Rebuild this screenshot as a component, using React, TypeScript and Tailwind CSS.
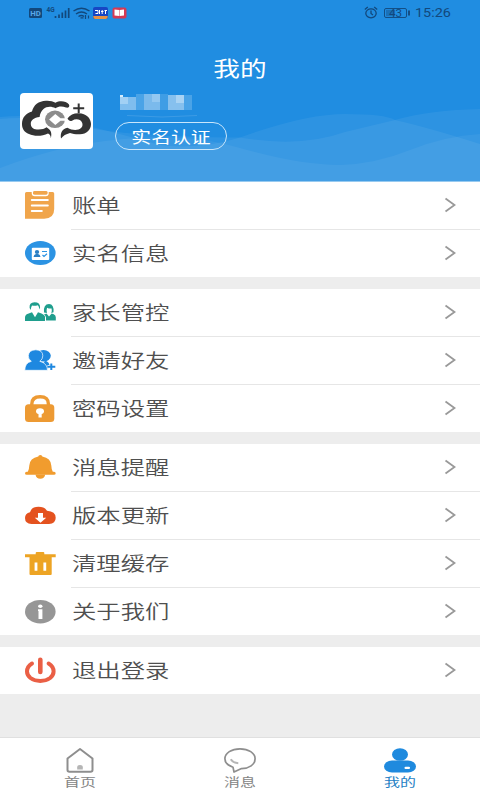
import React, { useState } from 'react';

type MenuItem = {
  label: string;
  icon: React.ReactNode;
};

const BillIcon = () => (
  <>
    <path d="M2.5 2h5.2v1.2q0 3 3 3h11q3 0 3-3V2h4q1.5 0 1.5 1.5V19q0 9.7-10 9.7H1V3.5Q1 2 2.5 2Z" fill="#f0a54b" />
    <path d="M9 2.200Q9 1 10.500 1H22q1.500 0 1.500 1.200v1q0 1.600-2 1.600H11q-2 0-2-1.600Z" fill="#f0a54b" />
    <path d="M7.800 10h16M7.800 15.500h16M7.800 21h10" stroke="#fff" strokeWidth="2" strokeLinecap="round" />
  </>
);

const IdIcon = () => (
  <>
    <ellipse cx="16.3" cy="15" rx="15.3" ry="12" fill="#2b93e3" />
    <rect x="7.8" y="9.8" width="17.4" height="12.2" rx="1" fill="#fff" />
    <ellipse cx="13" cy="14" rx="2.2" ry="2.1" fill="#2b7fc4" />
    <path d="M9.500 19q.3-2.500 2.500-3h2q2.200.5 2.500 3Z" fill="#2b7fc4" />
    <path d="M18 13.500h5M18.500 17l1.500 1.500 3-2.700" stroke="#2b93e3" strokeWidth="1.2" fill="none" />
  </>
);

const ParentsIcon = () => (
  <g fill="#1f9e8d">
    <path d="M5.600 11Q5 5.500 10.500 5.300q5.700 0 5.600 5.200l-.9 2Q15 8.800 13.500 8.300q-2.500 1-5.500.2Q7 10 6.700 13Z" />
    <path d="M1 24v-3.500q0-2.700 3-3.700l4-1.600 3 5 3-5 3.500 1.400q2.500 1 3.500 3V24Z" />
    <path d="M20 15.500q-.8-8.300 5-8.500 5.200.2 4.500 8.200l-2.200.8q.8-2.500.3-4.500-2.500.3-4.500-.8-1 2.500-.2 5.300Z" />
    <path d="M20 17.500l2.500-1 2.500 3 2.700-3 2 .8q2.100.8 2.100 3V23.500H22v-3q-.4-2-2-3Z" />
  </g>
);

const InviteIcon = () => (
  <g fill="#1e88e0">
    <ellipse cx="19.5" cy="10.8" rx="7.3" ry="5.8" />
    <path d="M17 24q9 0 9-2.500-.5-4.500-5-6Z" />
    <path d="M.8 25.300q0-7.300 6.500-9-3-2-3-5.600Q4.800 5 11.800 4.800q7 .3 7 6 0 3.500-3 5.500 7.700 2 7.700 9Z" stroke="#fff" strokeWidth=".7" />
    <path d="M27.300 18.300v7M23.500 21.800h7.800" stroke="#fff" strokeWidth="3.4" />
    <path d="M27.300 18.600v6.400M23.500 21.800h7.800" stroke="#1e88e0" strokeWidth="2" />
  </g>
);

const LockIcon = () => (
  <>
    <path d="M7.800 13v-2q0-7.300 8.300-7.300T24.400 11v2" fill="none" stroke="#ed9a33" strokeWidth="3.4" />
    <rect x="1" y="11.3" width="29.3" height="17.7" rx="3.5" fill="#ed9a33" />
    <ellipse cx="16" cy="18.3" rx="4" ry="3" fill="#fff" />
    <path d="M14.500 20h3.200v4.500h-3.200Z" fill="#fff" />
  </>
);

const BellIcon = () => (
  <g fill="#f19c2e">
    <path d="M14.300 4.500q0-1.500 2-1.500t2 1.500q8.600 1.500 9 9 .2 4.600 1.500 6.200H30q1.700 0 1.700 1.500T30 22.700H2.700Q1 22.700 1 21.200t1.700-1.500h1.100q1.300-1.600 1.500-6.200.5-7.500 9-9Z" />
    <path d="M11.500 22.500h9.700q-.8 4.300-4.900 4.300t-4.800-4.300Z" />
  </g>
);

const CloudIcon = () => (
  <>
    <path d="M7.500 24Q1 23.700 1 18q0-4.700 5-5.800Q7.500 6.700 14.500 6.700q6 0 8.500 4 8.700.5 8.700 7 0 6-6.700 6.300Z" fill="#e4521f" />
    <path d="M14 13h5v4.800h3.200l-5.700 5-5.700-5H14Z" fill="#fff" />
  </>
);

const TrashIcon = () => (
  <>
    <path d="M11.700 6.300V5q0-1 1-1h6.600q1 0 1 1v1.300h11.400v3h-4V26q0 1-1 1H6.500q-1 0-1-1V9.300H1v-3Z" fill="#eda424" />
    <path d="M12 14.500v8.200M20.800 14.500v8.200" stroke="#fff" strokeWidth="2.8" />
  </>
);

const InfoIcon = () => (
  <>
    <ellipse cx="16.3" cy="15.7" rx="15.3" ry="11.8" fill="#969696" />
    <ellipse cx="16.3" cy="10.3" rx="2.2" ry="1.7" fill="#fff" />
    <path d="M14 13.300h4.400v9.700h-3.900v-8H14Z" fill="#fff" />
  </>
);

const PowerIcon = () => (
  <g fill="none" stroke="#ea5f45" strokeWidth="4" strokeLinecap="round">
    <path d="M8 8.500Q3 11.500 3 16.500q0 3.600 3.500 6.500 4 2.900 9.800 2.900t9.800-2.900q3.500-2.900 3.500-6.500 0-5-5-8" />
    <path d="M16.300 4.800V17" strokeWidth="4.6" />
  </g>
);

const groups: MenuItem[][] = [
  [
    { label: '账单', icon: <BillIcon /> },
    { label: '实名信息', icon: <IdIcon /> },
  ],
  [
    { label: '家长管控', icon: <ParentsIcon /> },
    { label: '邀请好友', icon: <InviteIcon /> },
    { label: '密码设置', icon: <LockIcon /> },
  ],
  [
    { label: '消息提醒', icon: <BellIcon /> },
    { label: '版本更新', icon: <CloudIcon /> },
    { label: '清理缓存', icon: <TrashIcon /> },
    { label: '关于我们', icon: <InfoIcon /> },
  ],
  [{ label: '退出登录', icon: <PowerIcon /> }],
];

const tabs = [
  {
    id: 'home',
    label: '首页',
    icon: (
      <>
        <path d="M3.500 11.500 16 2l12.500 9.500V23q0 1.800-2 1.800h-21q-2 0-2-1.800Z" fill="none" stroke="#8e8e8e" strokeWidth="2" strokeLinejoin="round" />
        <path d="M13.200 22.500v-2.200q0-2.300 2.800-2.300t2.800 2.300v2.200Z" fill="#b5b5b5" />
      </>
    ),
  },
  {
    id: 'messages',
    label: '消息',
    icon: (
      <>
        <path d="M9 20.200C4 18.500 .9 15.500 .9 11.800 .9 6 7.500 1.800 16 1.800S31.100 6 31.100 11.800 25 21.500 17.500 21.600L10 25Z" fill="none" stroke="#8e8e8e" strokeWidth="1.7" strokeLinejoin="round" />
        <path d="M6.800 12.200q2 3.500 7.500 4" fill="none" stroke="#b5b5b5" strokeWidth="2" />
      </>
    ),
  },
  {
    id: 'mine',
    label: '我的',
    icon: (
      <>
        <ellipse cx="16" cy="7.5" rx="8" ry="6.3" fill="#1f8ade" />
        <rect x="0" y="13.5" width="32" height="12" rx="8" ry="6" fill="#1f8ade" />
        <rect x="20.5" y="19.7" width="5.5" height="2.3" rx="1.1" fill="#fff" />
      </>
    ),
  },
];

const StatusBar = () => (
  <div className="flex h-[26px] items-center justify-between pl-7 pr-[29px] text-[#12487c]">
    <svg width="100" height="16" viewBox="0 0 100 16">
      <rect x="1" y="3" width="13" height="10" rx="1.5" fill="#12487c" />
      <text x="2.3" y="11" fontSize="8" fontWeight="700" fontFamily="Roboto" fill="#5aa9e8" textLength="10.5" lengthAdjust="spacingAndGlyphs">HD</text>
      <text x="18.5" y="7" fontSize="6.5" fontWeight="700" fontFamily="Roboto" fill="#12487c">4G</text>
      <path d="M27.500 13v-2M31 13V9.500M34.300 13V7.500M37.500 13V5.500M40.700 13V3" stroke="#12487c" strokeWidth="1.7" />
      <path d="M45.500 6q8-5.500 16 0M48 9q5.500-4 11 0M50.500 11.500q3-2 5.500 0" fill="none" stroke="#12487c" strokeWidth="1.4" />
      <path d="M52.500 12.800h3M57.500 10v4M60.500 10.500v3" stroke="#12487c" strokeWidth="1.2" />
      <rect x="65" y="2" width="15" height="12" rx="2" fill="#1746c4" />
      <path d="M65.300 11h14.400v1q0 2-2 2H67.300q-2 0-2-2Z" fill="#e79345" />
      <path d="M67 5.500h3v3h-2.500M71.500 5v4M73 6.500h2.500M74.200 5v4M76.500 5.500h2.500M77.500 5v4" fill="none" stroke="#fff" strokeWidth="1" />
      <rect x="84.5" y="2.5" width="14" height="11" rx="2" fill="#d43a55" />
      <path d="M86.500 4.500l4.800.5v6l-4.800-.5ZM91.800 5l4.200-.5v6l-4.200.5Z" fill="#fff" />
    </svg>
    <div className="flex items-center">
      <svg width="48" height="16" viewBox="0 0 48 16">
        <ellipse cx="8" cy="8.3" rx="5.2" ry="4.5" fill="none" stroke="#12487c" strokeWidth="1.3" />
        <path d="M8 5.500v3l2 1.500M1.800 4.500l3-2.500M14.200 4.500l-3-2.500" fill="none" stroke="#12487c" strokeWidth="1.3" />
        <rect x="21.5" y="3.5" width="22" height="9" rx="1.5" fill="none" stroke="#12487c" strokeWidth=".9" />
        <rect x="23" y="4.8" width="9" height="6.4" fill="#12487c" opacity=".4" />
        <text x="26" y="11.5" fontSize="10" fontFamily="Roboto" fill="#12487c" textLength="13" lengthAdjust="spacingAndGlyphs">43</text>
        <path d="M46 5.500v5" stroke="#12487c" strokeWidth="1.8" />
      </svg>
      <span className="ml-1 w-9 whitespace-nowrap font-[Roboto] text-xs leading-4">
        <span className="inline-block origin-left scale-x-[1.2]">15:26</span>
      </span>
    </div>
  </div>
);

const Logo = () => (
  <div className="h-14 w-[73px] rounded bg-white">
    <svg width="73" height="56" viewBox="0 0 73 56">
      <path d="M30.700 45.500C31 43 30 41.500 28 40.500C22 43.500 14 43.500 9 41C4 39 2 35.500 2 31C2 24.500 6 20 12 18.500C13.500 12 18.500 8 26 7.700C30 7.500 33 8.200 35.500 9.800C40 7.300 46 8 49 11.500C50 13.500 48.500 15.300 46 14.600C42 13 38.500 13.300 35.500 15.300C31.500 13 26.500 13.300 23.500 16C21 18 20 21 19.600 24C14 24.500 10.800 27 10.800 31C11 35 14 36.600 18.500 36.600C22 36.600 24.500 35.600 26.500 34.300C30.500 36.500 32.500 40 30.700 45.500Z" fill="#333" />
      <path d="M41 45.500C40 39.500 42.500 35.500 47.500 34.700C51 36.800 55 37.500 58.500 36.500C62 35.300 63.300 32.500 62 29.500C60.500 26.300 56 25.300 52 27.700C50 28.500 48.500 27.500 47.500 25.500C50 21.800 54 20 59 20.200C66 20.600 71 25 71 31C71 37 66.500 41 60 41.300C56 41.500 53 41 50 40C46 41 43 42.800 41 45.500Z" fill="#333" />
      <ellipse cx="35" cy="26.3" rx="10" ry="8.7" fill="#8c8c8c" />
      <path d="M35.300 21l5.200 4.300H47v2.400h-6.500L35.300 32l-6.200-5.500Z" fill="#fff" />
      <path d="M58.700 10.500V20M53.200 15.300h11" stroke="#333" strokeWidth="2" />
    </svg>
  </div>
);

const App = () => {
  const [activeTab, setActiveTab] = useState('mine');

  return (
    <div className="flex h-[800px] w-[480px] flex-col overflow-hidden bg-[#ededed] font-['Noto_Sans_CJK_SC',sans-serif] text-[#4f4f4f]">
      {/* Header */}
      <header className="relative h-[182px] bg-[#208de1] text-white">
        <svg className="absolute inset-0" width="480" height="182" viewBox="0 0 480 182">
          <path d="M0 117Q35 113 80 124T160 145Q200 150 240 137.500 305 114 345 114T395 120Q430 128 480 144V182H0Z" fill="#fff" fillOpacity=".06" />
          <path d="M0 119Q35 115 80 126T240 137.500Q300 148 345 132L395 120Q430 110 480 109V182H0Z" fill="#fff" fillOpacity=".06" />
          <path d="M0 168Q55 147 105 141T180 138Q205 138 240 148 300 165 340 165 375 164 410 150T480 134V182H0Z" fill="#fff" fillOpacity=".05" />
          <path d="M0 181.500h480" stroke="#fff" strokeOpacity=".45" />
        </svg>
        <div className="relative">
          <StatusBar />
          <h1 className="flex h-[67px] items-center justify-center pt-[17px] text-[21px]">
            <span className="scale-x-[1.27]">我的</span>
          </h1>
          <div className="flex pl-5">
            <Logo />
            <div className="ml-[22px]">
              <svg width="90" height="29" viewBox="0 0 90 29">
                <path d="M5 2h3v2H5Z" fill="#d7edfc" />
                <rect x="5" y="4" width="16" height="13" fill="#7fbdee" />
                <rect x="5" y="4" width="8" height="7" fill="#a2d0f4" />
                <rect x="21" y="1" width="8" height="16" fill="#4aa3e7" />
                <rect x="29" y="1" width="16" height="16" fill="#7bbaec" />
                <rect x="37" y="1" width="8" height="8" fill="#94c8f1" />
                <rect x="45" y="1" width="8" height="16" fill="#3f9de5" />
                <rect x="53" y="2" width="16" height="15" fill="#86c0ee" />
                <rect x="61" y="2" width="8" height="8" fill="#a9d3f4" />
                <rect x="69" y="2" width="8" height="15" fill="#4aa3e7" />
                <path d="M12 22.500q35 3 70 0" fill="none" stroke="#3c9be5" strokeWidth="1" />
              </svg>
              <div className="flex h-7 w-28 items-center justify-center rounded-full border border-[#c9e6fb] text-base">
                <span className="scale-x-[1.24]">实名认证</span>
              </div>
            </div>
          </div>
        </div>
      </header>

      {/* Menu groups */}
      <main className="flex flex-1 flex-col gap-3">
        {groups.map((items) => (
          <section key={items[0].label} className="bg-white">
            {items.map(({ label, icon }) => (
              <button key={label} className="group flex w-full pl-6 text-left">
                <svg className="mt-2 shrink-0" width="32" height="31" viewBox="0 0 32 31">
                  {icon}
                </svg>
                <span className="ml-[15px] box-content flex h-[47px] flex-1 items-center justify-between border-b border-[#e6e6e6] pl-px pr-6 group-last:border-b-0">
                  <span className="mb-px origin-left scale-x-[1.28] text-[19px] leading-6 font-[350]">{label}</span>
                  <svg className="mb-0.5" width="12" height="16" viewBox="0 0 12 16">
                    <path d="M1.500 1.500 10.500 8l-9 6.500" fill="none" stroke="#999" strokeWidth="1.8" />
                  </svg>
                </span>
              </button>
            ))}
          </section>
        ))}
      </main>

      {/* Bottom tabs */}
      <nav className="grid h-[63px] grid-cols-3 border-t border-[#e0e0e0] bg-white">
        {tabs.map((tab) => (
          <button
            key={tab.id}
            onClick={() => setActiveTab(tab.id)}
            className={`flex flex-col items-center pt-[9px] ${activeTab === tab.id ? 'text-[#1f7fc4]' : 'text-[#858585]'}`}
          >
            <svg width="32" height="26" viewBox="0 0 32 26">
              {tab.icon}
            </svg>
            <span className="scale-x-[1.33] text-xs leading-[18px]">{tab.label}</span>
          </button>
        ))}
      </nav>
    </div>
  );
};

export default App;
